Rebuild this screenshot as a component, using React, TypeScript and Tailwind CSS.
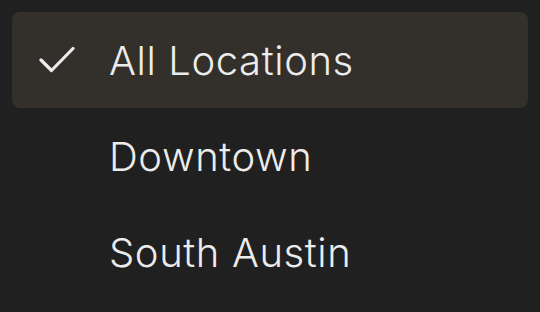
const items = ["All Locations", "Downtown", "South Austin"];

export default function App() {
  const selected = "All Locations";
  return (
    <div className="w-[540px] h-[312px] bg-[#202020] p-3 font-['Inter',sans-serif]">
      {items.map((item) => (
        <div
          key={item}
          className={`flex items-center h-[96px] rounded-lg pl-[27px] ${item === selected ? "bg-[#33302b]" : ""}`}
        >
          <div className="w-[36px] h-[28px] shrink-0">
            {item === selected && (
              <svg width="36" height="28" viewBox="0 0 36 28" fill="none">
                <path
                  d="M2 14 L12.5 24.5 L34 2.5"
                  stroke="#ececec"
                  strokeWidth="3.2"
                  strokeLinecap="round"
                  strokeLinejoin="round"
                />
              </svg>
            )}
          </div>
          <span className="ml-[34px] text-[40px] font-light tracking-[0.015em] text-[#ececec] leading-none pt-[2px]">
            {item}
          </span>
        </div>
      ))}
    </div>
  );
}
